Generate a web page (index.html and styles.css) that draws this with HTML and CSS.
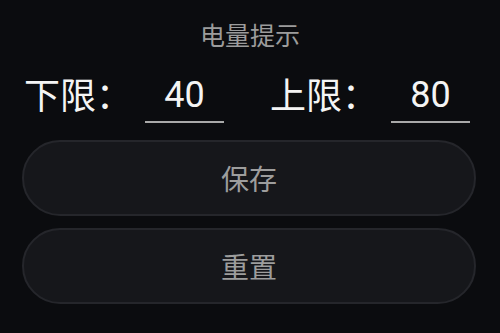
FILE: index.html
```html
<!DOCTYPE html>
<html lang="zh-CN">
<head>
<meta charset="utf-8">
<title>电量提示</title>
<link rel="stylesheet" href="styles.css">
</head>
<body>
  <div class="title">电量提示</div>
  <div class="limits">
    <span class="label">下限：</span>
    <span class="field">40</span>
    <span class="label label-upper">上限：</span>
    <span class="field">80</span>
  </div>
  <div class="buttons">
    <button class="btn">保存</button>
    <button class="btn">重置</button>
  </div>
</body>
</html>
```
FILE: styles.css
```css
html, body {
  margin: 0;
  padding: 0;
  background: #0b0c0f;
  width: 500px;
  height: 333px;
  overflow: hidden;
}
body {
  font-family: "Noto Sans CJK SC", "Noto Sans", sans-serif;
}
.title {
  margin-top: 20px;
  font-size: 25px;
  line-height: 28px;
  text-align: center;
  color: #9c9c9c;
}
.limits {
  display: flex;
  align-items: flex-start;
  margin-top: 23px;
  padding-left: 24px;
}
.label {
  font-size: 36px;
  line-height: 44px;
  color: #f4f4f4;
  width: 108px;
  white-space: nowrap;
}
.label-upper {
  margin-left: 46px;
}
.field {
  margin-left: 13px;
  width: 79px;
  box-sizing: border-box;
  font-family: Roboto, "Noto Sans", sans-serif;
  font-size: 36px;
  line-height: 44px;
  padding-top: 2px;
  padding-bottom: 4px;
  border-bottom: 2px solid #a9a9a9;
  text-align: center;
  color: #f4f4f4;
}
.buttons {
  display: flex;
  flex-direction: column;
  gap: 12px;
  margin: 17px 24px 0 22px;
}
.btn {
  height: 76px;
  border: 2px solid #25262b;
  border-radius: 38px;
  background: #16171b;
  color: #9d9d9d;
  font-family: "Noto Sans CJK SC", "Noto Sans", sans-serif;
  font-size: 28px;
  padding: 0;
}
```
